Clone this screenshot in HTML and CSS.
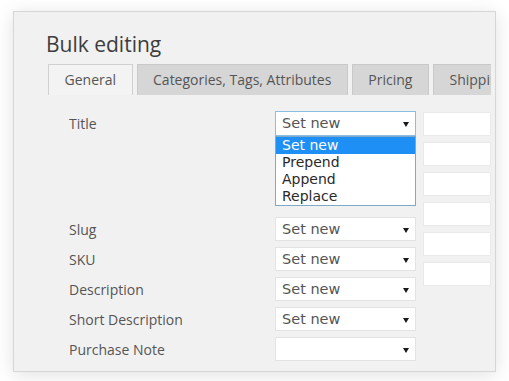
FILE: index.html
```html
<!DOCTYPE html>
<html lang="en">
<head>
<meta charset="utf-8">
<title>Bulk editing</title>
<link rel="stylesheet" href="styles.css">
</head>
<body>
<div class="panel">
  <h1 class="title">Bulk editing</h1>
  <div class="tabs">
    <div class="tab active">General</div>
    <div class="tab">Categories, Tags, Attributes</div>
    <div class="tab">Pricing</div>
    <div class="tab">Shipping</div>
  </div>
  <div class="form">
    <div class="rows">
      <div class="row row-title">
        <div class="label">Title</div>
        <div class="select-wrap">
          <div class="select focused"><span>Set new</span><i class="arrow"></i></div>
          <ul class="menu">
            <li class="selected">Set new</li>
            <li>Prepend</li>
            <li>Append</li>
            <li>Replace</li>
          </ul>
        </div>
      </div>
      <div class="row">
        <div class="label">Slug</div>
        <div class="select"><span>Set new</span><i class="arrow"></i></div>
      </div>
      <div class="row">
        <div class="label">SKU</div>
        <div class="select"><span>Set new</span><i class="arrow"></i></div>
      </div>
      <div class="row">
        <div class="label">Description</div>
        <div class="select"><span>Set new</span><i class="arrow"></i></div>
      </div>
      <div class="row">
        <div class="label">Short Description</div>
        <div class="select"><span>Set new</span><i class="arrow"></i></div>
      </div>
      <div class="row">
        <div class="label">Purchase Note</div>
        <div class="select"><span></span><i class="arrow"></i></div>
      </div>
    </div>
    <div class="inputs">
      <div class="input"></div>
      <div class="input"></div>
      <div class="input"></div>
      <div class="input"></div>
      <div class="input"></div>
      <div class="input"></div>
    </div>
  </div>
</div>
</body>
</html>
```

FILE: styles.css
```css
html, body {
  margin: 0;
  padding: 0;
  background: #ffffff;
}
body {
  width: 509px;
  height: 381px;
  overflow: hidden;
  font-family: "Open Sans", "DejaVu Sans", sans-serif;
}
.panel {
  box-sizing: border-box;
  margin: 11px 0 0 13px;
  width: 483px;
  height: 361px;
  background: #f1f1f1;
  border: 1px solid #d6d6d6;
  box-shadow: 0 3px 18px rgba(0, 0, 0, 0.12);
  padding: 18px 4px 0 34px;
  overflow: hidden;
}
.title {
  margin: 0 0 6px -2px;
  font-size: 21px;
  line-height: 28px;
  font-weight: 400;
  color: #3d3d3d;
}
.tabs {
  display: flex;
  gap: 4px;
  width: 443px;
  overflow: hidden;
  white-space: nowrap;
}
.tab {
  flex: none;
  box-sizing: border-box;
  height: 31px;
  padding: 0 15.5px;
  font-size: 14px;
  line-height: 30px;
  color: #555;
  background: #d6d6d6;
  border: 1px solid #c9c9c9;
  border-bottom: none;
}
.tab.active {
  background: #f3f3f3;
  border-color: #d0d0d0;
}
.form {
  display: flex;
  gap: 7px;
  padding-top: 16px;
}
.rows {
  display: flex;
  flex-direction: column;
  gap: 6px;
}
.row {
  display: flex;
  align-items: flex-start;
  height: 24px;
}
.row-title {
  height: 100px;
}
.label {
  box-sizing: border-box;
  width: 227px;
  padding-left: 21px;
  font-size: 14px;
  line-height: 25px;
  color: #555;
}
.select-wrap {
  position: relative;
}
.select {
  position: relative;
  box-sizing: border-box;
  width: 141px;
  height: 24px;
  background: #fff;
  border: 1px solid #e3e3e3;
  padding-left: 6px;
  font-family: "DejaVu Sans", sans-serif;
  font-size: 14.5px;
  line-height: 22px;
  color: #555;
}
.select.focused {
  height: 25px;
  border-color: #8bbfdf;
}
.arrow {
  position: absolute;
  right: 6px;
  top: 10px;
  width: 0;
  height: 0;
  border-left: 3px solid transparent;
  border-right: 3px solid transparent;
  border-top: 5px solid #1a1a1a;
}
.menu {
  position: absolute;
  left: 0;
  top: 25px;
  box-sizing: border-box;
  width: 141px;
  margin: 0;
  padding: 0;
  list-style: none;
  background: #fff;
  border: 1px solid #7fa9c9;
  font-family: "DejaVu Sans", sans-serif;
  font-size: 14px;
  line-height: 17px;
  color: #2a2a2a;
}
.menu li {
  padding-left: 6px;
  height: 17px;
}
.menu li.selected {
  background: #1e8ff5;
  color: #fff;
}
.inputs {
  display: flex;
  flex-direction: column;
  gap: 6px;
  margin-top: 1px;
}
.input {
  box-sizing: border-box;
  width: 68px;
  height: 24px;
  background: #fff;
  border: 1px solid #e9e9e9;
}
```
